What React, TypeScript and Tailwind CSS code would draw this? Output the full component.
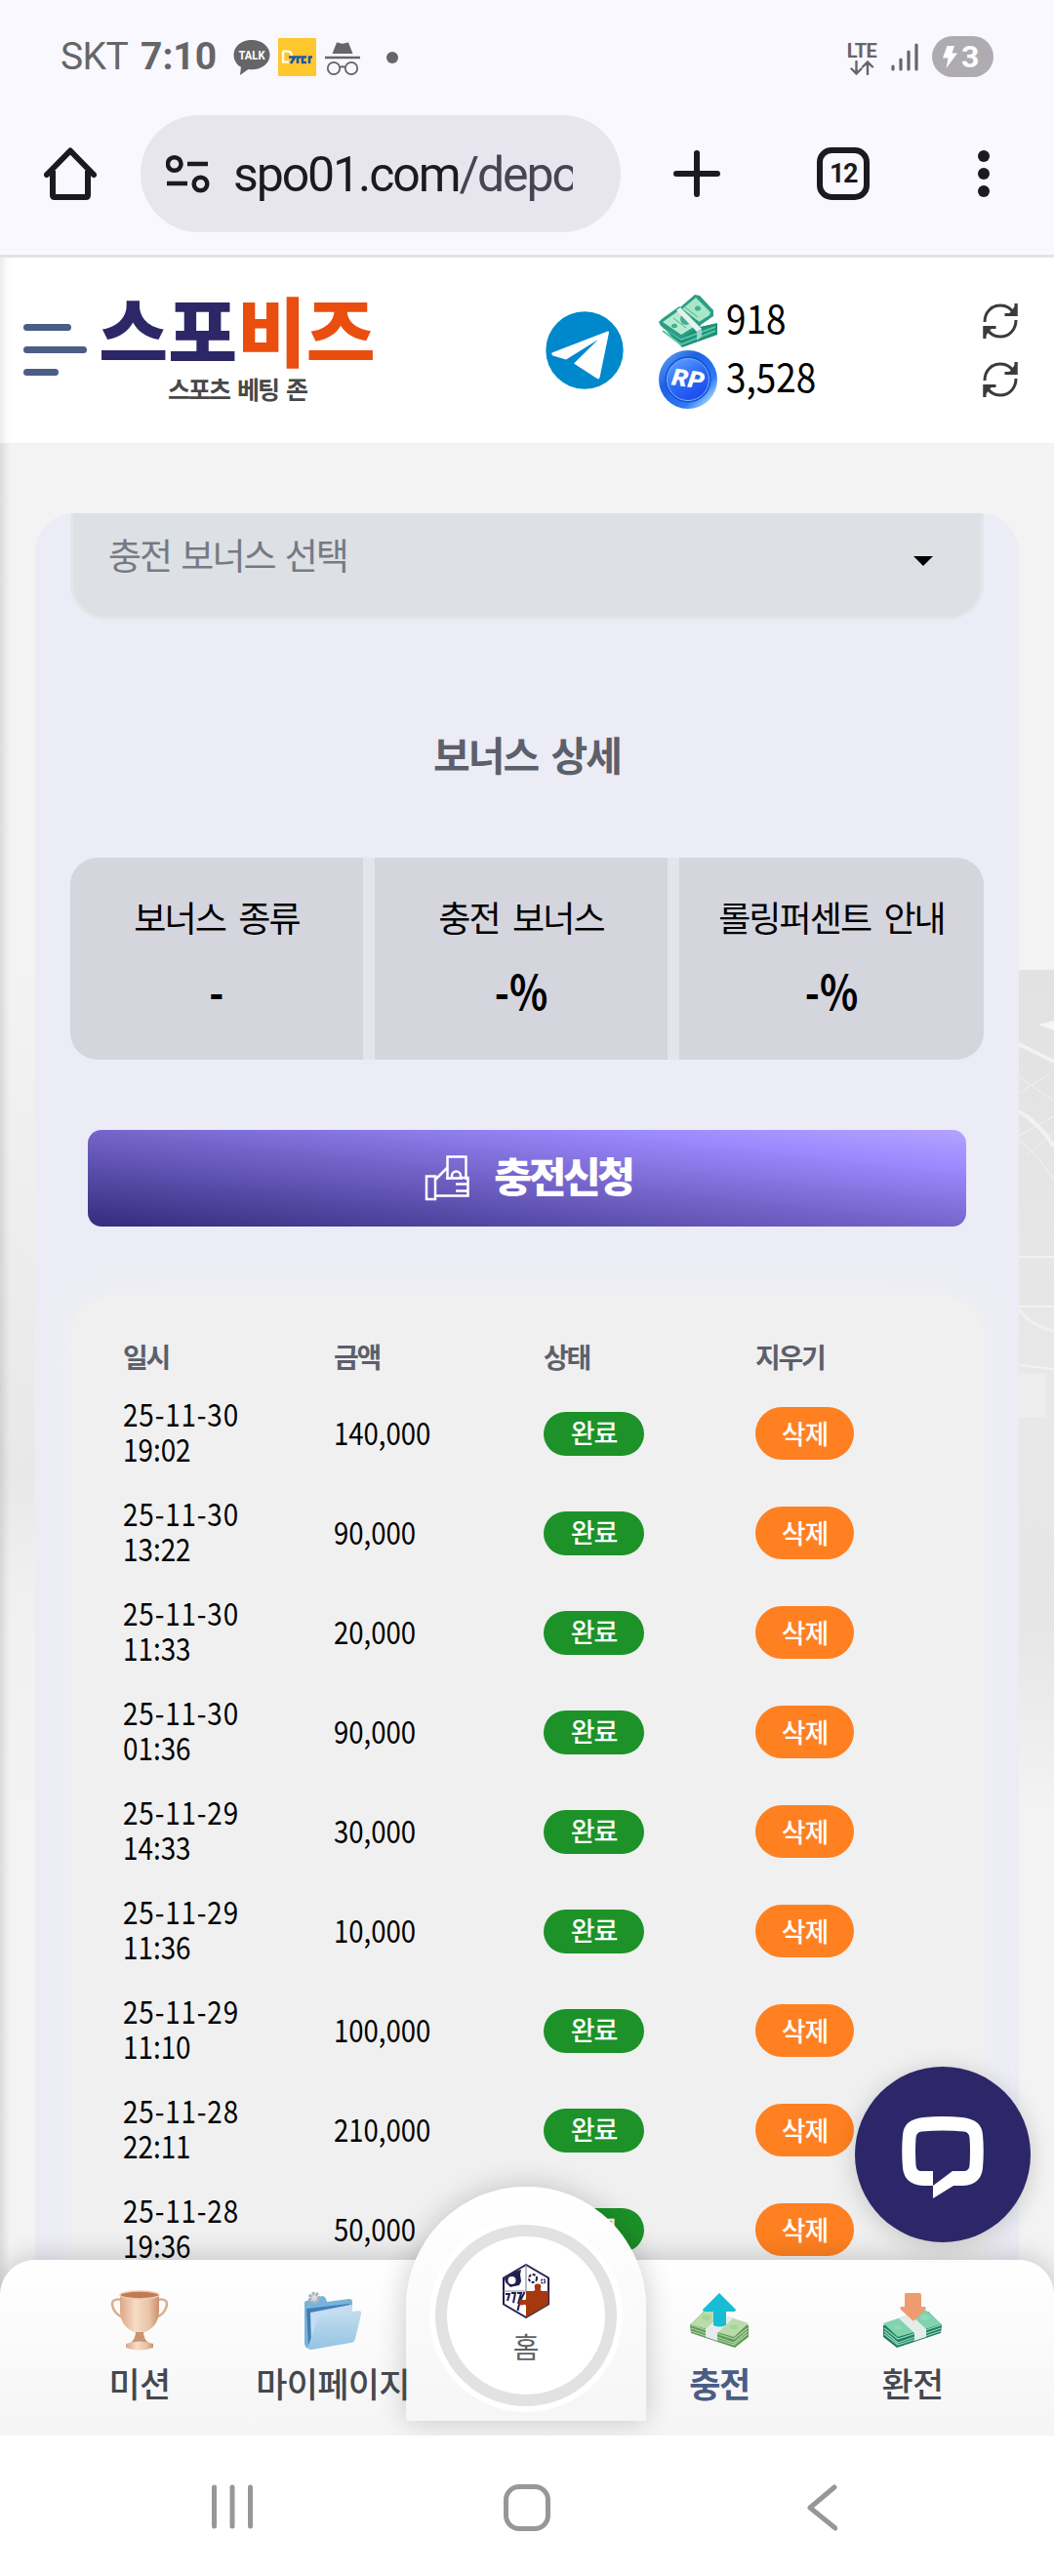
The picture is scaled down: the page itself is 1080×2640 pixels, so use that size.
import React from 'react';

interface Deposit {
  date: string;
  time: string;
  amount: string;
}

const deposits: Deposit[] = [
  { date: '25-11-30', time: '19:02', amount: '140,000' },
  { date: '25-11-30', time: '13:22', amount: '90,000' },
  { date: '25-11-30', time: '11:33', amount: '20,000' },
  { date: '25-11-30', time: '01:36', amount: '90,000' },
  { date: '25-11-29', time: '14:33', amount: '30,000' },
  { date: '25-11-29', time: '11:36', amount: '10,000' },
  { date: '25-11-29', time: '11:10', amount: '100,000' },
  { date: '25-11-28', time: '22:11', amount: '210,000' },
  { date: '25-11-28', time: '19:36', amount: '50,000' },
];

const StatusBar = () => (
  <div className="h-[118px] pl-[62px] pr-[62px] pt-[37px] flex items-start justify-between font-[Roboto,sans-serif] text-[#666568]">
    <div className="flex items-center h-[42px]">
      <span className="text-[39px] leading-[42px] tracking-[-0.6px] w-[82px]">SKT</span>
      <span className="text-[39px] leading-[42px] font-bold w-[95px]">7:10</span>
      <svg width="38" height="36" viewBox="0 0 38 36" className="mt-[2px]">
        <path d="M19 0C8.500 0 0.500 6.700 0.500 15.200c0 5.600 3.200 10.200 7.400 12.600L7 36l8.500-6c1 .2 2.300.3 3.500.3 10.500 0 18.500-6.700 18.500-15.100S29.500 0 19 0z" fill="#666568" />
        <text x="19" y="20" textAnchor="middle" fontSize="13" fontWeight="700" fill="#fff" textLength="27" lengthAdjust="spacingAndGlyphs">TALK</text>
      </svg>
      <svg width="39" height="39" viewBox="0 0 39 39" className="ml-[8px]">
        <rect width="39" height="39" fill="#ffc72e" />
        <path d="M5 13.500h4.500c3 0 4.500 2 4.500 5.500M5 13.500v11h6" fill="none" stroke="#fffbe8" strokeWidth="2.400" />
        <path d="M11 19.500h6l-4 6.500M20 26v-6.500h3.500M29 25h-4v-5.500h4M32 26v-6.500h3" fill="none" stroke="#1c56a8" strokeWidth="2.600" />
      </svg>
      <svg width="36" height="35" viewBox="0 0 36 35" className="ml-[9px] mt-[2px]">
        <path d="M12 1.500c2 0 3.500 1.200 6 1.200S22 1.500 24 1.500L28.500 13h-21z" fill="#666568" />
        <path d="M0 17h36" stroke="#666568" strokeWidth="2.600" />
        <circle cx="9" cy="28" r="6.200" fill="none" stroke="#666568" strokeWidth="1.800" />
        <circle cx="27" cy="28" r="6.200" fill="none" stroke="#666568" strokeWidth="1.800" />
        <path d="M15 27c2-1 4-1 6 0" fill="none" stroke="#666568" strokeWidth="1.800" />
      </svg>
      <span className="ml-[27px] w-3 h-3 rounded-full bg-[#666568] mt-[2px]" />
    </div>
    <div className="flex items-center h-[42px]">
      <div className="flex flex-col items-center w-[32px] mr-[14px] pt-[1px]">
        <span className="text-[20px] leading-[18px] font-bold tracking-[-0.5px] pt-[3px]">LTE</span>
        <svg width="26" height="15" viewBox="0 0 26 15" fill="none" stroke="#666568" strokeWidth="2.400" strokeLinecap="round" className="mt-[1px]">
          <path d="M7.500 1v12M2.500 8.500l5 5 5-5M19 14V2M14 6.500l5-5 5 5" />
        </svg>
      </div>
      <svg width="28" height="30" viewBox="0 0 28 30" stroke="#666568" strokeWidth="3.200" strokeLinecap="round" className="mr-[14px]">
        <path d="M2 25v3M10 18v10M18 10v18M26 3v25" />
      </svg>
      <div className="w-[63px] h-[42px] rounded-full bg-[#aeacb0] flex items-center pl-[11px] text-white">
        <svg width="15" height="23" viewBox="0 0 15 23">
          <path d="M4.500 0H12L9.500 7.500H15L3.500 23 5.500 12.500H0z" fill="#fff" />
        </svg>
        <span className="text-[32px] leading-[42px] font-bold ml-[4px]">3</span>
      </div>
    </div>
  </div>
);

const BrowserBar = () => (
  <div className="h-[143px] flex items-start font-[Roboto,sans-serif]">
    <div className="h-[120px] w-full flex items-center">
      <svg width="54" height="54" viewBox="0 0 54 54" fill="none" stroke="#1a1b20" strokeWidth="6" className="ml-[45px]">
        <path d="M3 28L27 3.500 51 28" strokeLinecap="round" strokeLinejoin="round" />
        <path d="M9 24v25q0 2 2 2h32q2 0 2-2V24" strokeLinejoin="round" />
      </svg>
      <div className="ml-[45px] w-[492px] h-[120px] rounded-full bg-[#e7e6ef] flex items-center pl-[26px]">
        <svg width="45" height="40" viewBox="0 0 45 40" fill="none" stroke="#1a1b20" strokeWidth="4.500">
          <circle cx="8.700" cy="10" r="6.800" />
          <path d="M22 10h21M1 30h21" />
          <circle cx="35.500" cy="30.500" r="6.800" />
        </svg>
        <div className="ml-[24px] w-[348px] overflow-hidden whitespace-nowrap text-[50px] leading-[64px] tracking-[-2.100px] text-[#1a1b20] pt-[2px]">
          spo01.com<span className="text-[#454650]">/depo</span>
        </div>
      </div>
      <svg width="48" height="48" viewBox="0 0 48 48" stroke="#1a1b20" strokeWidth="6" strokeLinecap="round" className="ml-[54px]">
        <path d="M24 3v42M3 24h42" />
      </svg>
      <div className="ml-[99px] w-[54px] h-[54px] border-[6px] border-[#1a1b20] rounded-[15px] flex items-center justify-center text-[27px] leading-[30px] font-bold text-[#1a1b20] tracking-[-1.500px]">
        12
      </div>
      <div className="ml-[111px] flex flex-col gap-[6px]">
        <span className="w-3 h-3 rounded-full bg-[#1a1b20]" />
        <span className="w-3 h-3 rounded-full bg-[#1a1b20]" />
        <span className="w-3 h-3 rounded-full bg-[#1a1b20]" />
      </div>
    </div>
  </div>
);

const CashIcon = () => (
  <svg width="60" height="56" viewBox="0 0 60 56">
    <path d="M2 32L24 55 60 42V30L24 38z" fill="#1d8f78" />
    <path d="M4 38L23 52 58 38M4 34L23 47 58 34" fill="none" stroke="#53c4a4" strokeWidth="2" />
    <path d="M16 19L37 1l5 1 14 15v6L24 45 4 33z" fill="#2b9e85" />
    <path d="M20 19L38 4l15 15-1 3-28 18z" fill="#a8e6c8" />
    <path d="M0 29l3-3 18-13 22 17v3L22 46 2 33z" fill="#2b9e85" />
    <path d="M4 29l17-12 18 15-16 10z" fill="#b5ecd0" />
    <path d="M15 25l13 10M27 14l13 10" stroke="#4fae92" strokeWidth="1" />
    <ellipse cx="16" cy="33" rx="3" ry="2.200" fill="#3fb38f" />
    <ellipse cx="40" cy="15" rx="3" ry="2.600" fill="#3fb38f" />
    <ellipse cx="28" cy="26" rx="6" ry="6" fill="#44ad8e" />
    <path d="M18 17l4-3 22 22-5 3z" fill="#e5f3f1" />
    <path d="M39 39l5-3v8l-5 4z" fill="#9fd3c8" />
  </svg>
);

const RpIcon = () => (
  <svg width="60" height="60" viewBox="0 0 60 60">
    <defs>
      <linearGradient id="rpRim" x1="0" y1="0" x2="1" y2="1">
        <stop offset="0" stopColor="#6db0f5" />
        <stop offset="0.35" stopColor="#1c62e2" />
        <stop offset="0.7" stopColor="#2f7af4" />
        <stop offset="0.85" stopColor="#8cc4fb" />
        <stop offset="1" stopColor="#1b4fd8" />
      </linearGradient>
      <linearGradient id="rpFace" x1="0" y1="0" x2="0.600" y2="1">
        <stop offset="0" stopColor="#64a8ff" />
        <stop offset="0.6" stopColor="#2a68f3" />
        <stop offset="1" stopColor="#1f4cf0" />
      </linearGradient>
    </defs>
    <circle cx="30" cy="30" r="30" fill="url(#rpRim)" />
    <circle cx="30" cy="30" r="23.500" fill="#164fd6" />
    <circle cx="30" cy="30" r="21.500" fill="url(#rpFace)" stroke="#79b4ff" strokeWidth="1" />
    <text x="30" y="37.500" textAnchor="middle" fontSize="24" fontWeight="900" fontStyle="italic" fill="#fff" fontFamily="Roboto, sans-serif" transform="rotate(8 30 30)" textLength="33" lengthAdjust="spacingAndGlyphs">RP</text>
  </svg>
);

const RefreshIcon = () => (
  <svg width="36" height="36" viewBox="0 0 36 36" fill="none" stroke="#3b3b3b" strokeWidth="3">
    <path d="M2 19C2 9 9 2 18 2c7 0 11.500 3.500 14.500 9" />
    <path d="M34 17c0 10-7 17-16 17-7 0-11.500-3.500-14.500-9" />
    <path d="M34 0v11.500H22.500M2 36V24.500h11.500" />
    <path d="M34 4v7.500h-6zM2 32v-7.500h6z" fill="#3b3b3b" />
  </svg>
);

const SiteHeader = () => (
  <header className="h-[193px] border-t-[3px] border-[#e1e3ea] bg-white flex items-start shadow-[inset_9px_0_8px_-6px_rgba(0,0,0,0.10)]">
    <div className="ml-[24px] mt-[68px] flex flex-col gap-4">
      <span className="h-[7px] w-[49px] rounded-full bg-[#4a5d85]" />
      <span className="h-[7px] w-[65px] rounded-full bg-[#4a5d85]" />
      <span className="h-[7px] w-[36px] rounded-full bg-[#4a5d85]" />
    </div>
    <div className="ml-[16px] mt-[35px] w-[276px] flex flex-col items-center">
      <div className="text-[77px] leading-[76px] font-black whitespace-nowrap text-[#2d2768]">
        스포<span className="text-[#e94e0f]">비즈</span>
      </div>
      <div className="mt-[8px] text-[25px] leading-[30px] font-bold tracking-[-1.900px] [word-spacing:4px] whitespace-nowrap text-[#484848]">스포츠 베팅 존</div>
    </div>
    <svg width="80" height="80" viewBox="0 0 80 80" className="ml-[178px] mt-[55px]">
      <circle cx="40" cy="40" r="39.700" fill="#0088cc" />
      <path d="M6.500 42.500L63.500 20.500q1.500-.5 1.500 1.200L55.500 68q-.8 2.500-3 .8L29 53.500 54 29 21 49.500 7.500 45.500q-2-1.500-1-3z" fill="#fff" />
    </svg>
    <div className="ml-[36px] mt-[37px] w-[330px] flex flex-col">
      <div className="flex items-start h-[58px] gap-[9px]">
        <CashIcon />
        <span className="text-[41px] leading-[50px] -mt-[2px] text-black inline-block origin-left scale-x-[0.9]">918</span>
      </div>
      <div className="flex items-start h-[60px] gap-[9px]">
        <RpIcon />
        <span className="text-[41px] leading-[50px] text-black inline-block origin-left scale-x-[0.9]">3,528</span>
      </div>
    </div>
    <div className="ml-[2px] mt-[47px] flex flex-col gap-[24px]">
      <RefreshIcon />
      <RefreshIcon />
    </div>
  </header>
);

// faint stadium photo behind the card, only the margins are visible
const Backdrop = () => (
  <svg width="1080" height="860" viewBox="0 0 1080 860" className="absolute left-0 top-[540px]">
    <defs>
      <linearGradient id="photo" x1="0" y1="0" x2="0" y2="1">
        <stop offset="0" stopColor="#e2e2e2" />
        <stop offset="0.5" stopColor="#e8e8e8" />
        <stop offset="0.78" stopColor="#e6e6e6" />
        <stop offset="1" stopColor="#f3f3f3" />
      </linearGradient>
      <linearGradient id="photoLeft" x1="0" y1="0" x2="0" y2="1">
        <stop offset="0" stopColor="#f3f3f3" />
        <stop offset="0.6" stopColor="#e8e8e8" />
        <stop offset="0.74" stopColor="#f0f0f0" />
        <stop offset="1" stopColor="#f3f3f3" />
      </linearGradient>
    </defs>
    <rect x="0" width="36" height="860" fill="url(#photoLeft)" />
    <rect x="1044" width="36" height="860" fill="url(#photo)" />
    <g fill="none" stroke="#f2f2f2" strokeWidth="2">
      <path d="M1044 76l36 18M1044 145c14 8 26 20 36 36" strokeWidth="4" />
      <path d="M1044 126l32-20M1044 110l36 24M1044 170l36-20M1052 190l28-24M1044 175q20 14 36 40" strokeWidth="1" />
      <path d="M1044 294h36M1044 345h36M1044 405l36 4" />
    </g>
    <path d="M1064 56l16-4v10z" fill="#f5f5f5" />
    <path d="M1044 348q14 18 36 22" stroke="#f0f0f0" strokeWidth="3" fill="none" />
    <path d="M1044 413h28v46h-28z" fill="#ededed" />
  </svg>
);

const ThumbIcon = () => (
  <svg width="46" height="47" viewBox="0 0 46 47" fill="none" stroke="#fff" strokeWidth="2.500">
    <path d="M2 21.500h9V45H2zM11 25l12-12M11 41.500h33.500V23H38" />
    <path d="M23.500 25V1.500h19V25" />
    <path d="M22 23.500h17M28 23v-2a4.500 4.500 0 0 1 9 0v2" />
    <path d="M32 29.500h12.500M32 36.500h12.500" />
  </svg>
);

const BonusCell = ({ label, value }: { label: string; value: string }) => (
  <div className="bg-[#d5d5de] pt-[38px] flex flex-col items-center text-black">
    <span className="text-[36px] leading-[44px] tracking-[-1.900px] [word-spacing:7px] whitespace-nowrap">{label}</span>
    <span className="mt-[28px] text-[48px] leading-[50px] font-bold inline-block scale-x-[0.85]">{value}</span>
  </div>
);

const DepositRow = ({ date, time, amount }: Deposit) => (
  <div className="h-[102px] grid grid-cols-[216px_215px_217px_1fr] items-center text-black text-[32px] leading-[36px]">
    <div className="pb-[6px] origin-left scale-x-[0.87] whitespace-nowrap">
      <div className="tracking-[1px]">{date}</div>
      <div>{time}</div>
    </div>
    <div className="pb-[4px] origin-left scale-x-[0.86]">{amount}</div>
    <div className="w-[103px] h-[45px] rounded-full bg-[#1c9228] text-white text-[27px] leading-[42px] tracking-[-1px] font-medium text-center">완료</div>
    <button className="w-[101px] h-[54px] rounded-full bg-[#ff8020] text-white text-[27px] leading-[50px] tracking-[-1px] font-medium text-center">삭제</button>
  </div>
);

const TrophyIcon = () => (
  <svg width="60" height="62" viewBox="0 0 60 62">
    <defs>
      <linearGradient id="cup" x1="0" y1="0" x2="1" y2="0">
        <stop offset="0" stopColor="#dba888" />
        <stop offset="0.4" stopColor="#f8dcc6" />
        <stop offset="0.75" stopColor="#e9c3a6" />
        <stop offset="1" stopColor="#c98f6d" />
      </linearGradient>
    </defs>
    <path d="M12 10C3 8 1 12 2.500 17 4 23 8 26 13 28M48 10c9-2 11 2 9.500 7C56 23 52 26 47 28" fill="none" stroke="#dcae8f" strokeWidth="2.600" />
    <path d="M10 4h40v17c0 12-7 20-17 23h-6C17 41 10 33 10 21z" fill="url(#cup)" />
    <ellipse cx="30" cy="5" rx="20" ry="4" fill="#c07a55" stroke="#f0cdb4" strokeWidth="1.500" />
    <path d="M26 43h8q0 7 6 12H20q6-5 6-12z" fill="#c99472" />
    <path d="M16 55q14-5 28 0v4q-14 5-28 0z" fill="url(#cup)" />
  </svg>
);

const FolderIcon = () => (
  <svg width="60" height="62" viewBox="0 0 60 62">
    <defs>
      <linearGradient id="folder" x1="0" y1="0" x2="0" y2="1">
        <stop offset="0" stopColor="#c2deef" />
        <stop offset="1" stopColor="#94c4e2" />
      </linearGradient>
    </defs>
    <path d="M1 13q0-2 2-2l16-5q4 0 5 6l23-3q3 0 3 3v30L8 60q-6 1-7-5z" fill="#7ab3da" />
    <path d="M3 19l44-5v28L5 56z" fill="#3d7fb8" />
    <path d="M7 23l41-8q3 0 2 4v24L8 54z" fill="#c5dcf3" />
    <path d="M14 30q1-3 4-3l38-6q4 0 3 4l-6 25q-1 4-5 4L8 61q-4 0-3-4z" fill="url(#folder)" />
    <circle cx="11" cy="8" r="4.500" fill="#d9dde2" stroke="#a9b0b8" strokeWidth="3.500" strokeDasharray="2.500 1.200" />
  </svg>
);

interface StackProps {
  side: string;
  edge: string;
  face: string;
  arrow: React.ReactNode;
  flip?: boolean;
}

const MoneyStack = ({ side, edge, face, arrow, flip }: StackProps) => (
  <svg width="60" height="62" viewBox="0 0 60 62">
    <g transform={flip ? 'translate(60 0) scale(-1 1)' : undefined}>
      <path d="M0 36L14 22 60 36v12L46 59 1 44z" fill={side} />
      <path d="M1 39l44 15 14-12M1 42l44 14 14-11M1 36l44 14 14-11" fill="none" stroke={edge} strokeWidth="1.300" />
      <path d="M0 35L17 20l43 14-15 14z" fill={face} />
      <ellipse cx="17" cy="28" rx="5" ry="3" fill={edge} />
      <ellipse cx="45" cy="38" rx="4" ry="2.500" fill={edge} />
      <path d="M16 40l16-15 12 4-16 15v8l-12-4z" fill="#e6ecec" />
    </g>
    {arrow}
  </svg>
);

const HexLogo = () => (
  <svg width="48" height="56" viewBox="0 0 48 56">
    <path d="M24 1L47 14.500v27L24 55 1 41.500v-27z" fill="#fff" stroke="#211d4e" strokeWidth="2" strokeLinejoin="round" />
    <path d="M3 31h4l-2 7M9 30h4l-2 10M15 30h4l-3 11M22.500 29l-5 10-2 9" fill="none" stroke="#211d4e" strokeWidth="2" />
    <path d="M24 28h23v13.500L24 55z" fill="#a4380f" />
    <path d="M24 28h8q2-1 1-3c-1-3 0-4.500 3-4.500s4 1.500 3 4.500q-1 2 1 3v1H24v14q-1-2-3-1c-2 1.500-4 0-4-2.500s2-4 4-2.500q2 1 3-1z" fill="#a4380f" />
    <path d="M24 1v27M1 28h23" stroke="#8e8da5" strokeWidth="1.200" />
    <path d="M2 15l11-7 6-2-1 5 1 7-2 4-5 1-4 1-5-5z" fill="#211d4e" />
    <circle cx="9.500" cy="17" r="4" fill="#fff" />
    <circle cx="31" cy="15" r="4" fill="none" stroke="#211d4e" strokeWidth="2" strokeDasharray="3 1.500" />
    <circle cx="41.500" cy="18" r="2" fill="none" stroke="#211d4e" strokeWidth="1.500" strokeDasharray="2 1" />
  </svg>
);

const NavItem = ({ icon, label, active }: { icon: React.ReactNode; label: string; active?: boolean }) => (
  <div className="w-[198px] pt-[31px] flex flex-col items-center relative z-20">
    {icon}
    <span
      className={
        active
          ? 'mt-[11px] text-[35px] leading-[44px] tracking-[-1.500px] font-bold text-[#4a5d85] whitespace-nowrap'
          : 'mt-[11px] text-[35px] leading-[44px] tracking-[-0.700px] font-medium text-[#45484f] whitespace-nowrap'
      }
    >
      {label}
    </span>
  </div>
);

const BottomNav = () => (
  <nav className="absolute left-0 bottom-0 w-full h-[180px] rounded-t-[36px] bg-linear-to-b from-white to-[#f5f5f5] shadow-[0_0_30px_rgba(0,0,0,0.22)] px-[44px] flex">
    <NavItem icon={<TrophyIcon />} label="미션" />
    <NavItem icon={<FolderIcon />} label="마이페이지" />
    <div className="w-[198px] flex justify-center">
      <div className="relative z-10 shrink-0 -mt-[75px] w-[246px] h-[240px] rounded-t-[123px] bg-linear-to-b from-white to-[#f6f6f6] shadow-[0_0_30px_rgba(0,0,0,0.20)] pt-[33px] flex flex-col items-center">
        <div className="w-[198px] h-[198px] rounded-full bg-white p-[6px]">
          <div className="w-[186px] h-[186px] rounded-full border-[12px] border-[#e2e2e2] flex flex-col items-center pt-[28px]">
            <HexLogo />
            <span className="mt-[10px] text-[29px] leading-[36px] text-[#5d6064]">홈</span>
          </div>
        </div>
      </div>
    </div>
    <NavItem
      active
      label="충전"
      icon={
        <MoneyStack
          side="#5f9a58"
          edge="#a9d39c"
          face="#b9dcaa"
          arrow={<path d="M30 3L47 20q0 2-2 2h-8v14q-7 3-13 0V22h-9q-2 0-2-2z" fill="#18bcd4" />}
        />
      }
    />
    <NavItem
      label="환전"
      icon={
        <MoneyStack
          flip
          side="#1f7d60"
          edge="#8fd9b9"
          face="#7fd3ae"
          arrow={<path d="M23 3h14q2 0 2 2v12h3q3 0 1 3L32 31q-1 1-2 0L18 20q-2-3 1-3h3V5q0-2 1-2z" fill="#ee9b70" />}
        />
      }
    />
  </nav>
);

const SystemNav = () => (
  <div className="h-[144px] bg-white flex justify-between px-[217px] pt-[50px]">
    <svg width="43" height="47" viewBox="0 0 43 47" stroke="#979797" strokeWidth="5" strokeLinecap="round">
      <path d="M2.500 3v40M21 3v40M39.500 3v40" />
    </svg>
    <div className="ml-[36px] w-[48px] h-[48px] rounded-[16px] border-[5px] border-[#979797]" />
    <svg width="31" height="48" viewBox="0 0 31 48" fill="none" stroke="#979797" strokeWidth="5" strokeLinecap="round" strokeLinejoin="round" className="mr-[5px] ml-[43px]">
      <path d="M28 3L3 24l26 21" />
    </svg>
  </div>
);

const App: React.FC = () => {
  return (
    <div className="w-[1080px] h-[2640px] overflow-hidden bg-[#f9f8ff] font-['Noto_Sans_CJK_KR',sans-serif] flex flex-col">
      <StatusBar />
      <BrowserBar />
      <SiteHeader />

      <main className="relative h-[2042px] overflow-hidden bg-[#f3f3f3] px-9 pt-[72px]">
        <Backdrop />
        <div className="relative h-[2000px] rounded-t-[40px] overflow-hidden bg-[#ececf6] px-9">
          <div className="h-[109px] rounded-b-[36px] border-x-[3px] border-b-[3px] border-[#e4e6ea] bg-[#dde0e5] flex justify-between pl-[36px] pr-[49px]">
            <span className="pt-[22px] text-[37px] leading-[40px] tracking-[-2px] [word-spacing:4px] text-[#777983] whitespace-nowrap">충전 보너스 선택</span>
            <svg width="20" height="10" viewBox="0 0 20 10" className="mt-[44px]">
              <path d="M0 0h20L10 10z" fill="#000" />
            </svg>
          </div>

          <h2 className="mt-[115px] text-[41px] leading-[44px] tracking-[-2px] [word-spacing:6px] font-bold text-center text-[#5c606b]">보너스 상세</h2>

          <div className="mt-[85px] h-[207px] rounded-[28px] overflow-hidden bg-[#e4e5ea] grid grid-cols-[300px_300px_312px] gap-[12px]">
            <BonusCell label="보너스 종류" value="-" />
            <BonusCell label="충전 보너스" value="-%" />
            <BonusCell label="롤링퍼센트 안내" value="-%" />
          </div>

          <div className="px-[18px] pt-[72px]">
            <button className="w-full h-[99px] rounded-[14px] bg-[linear-gradient(to_top_right,#352b7c_0%,#7565cb_50%,#9c8aff_80%,#b4a3ff_100%)] flex items-center justify-center gap-[25px] text-white pl-[3px]">
              <ThumbIcon />
              <span className="text-[42px] leading-[50px] font-black tracking-[-3.300px] pb-[8px]">충전신청</span>
            </button>
          </div>

          <div className="mt-[71px] h-[1100px] rounded-[44px] bg-[#f0f0f0] shadow-[0_0_50px_#f0f0f0] pl-[54px] pt-[44px]">
            <div className="h-[36px] grid grid-cols-[216px_215px_217px_1fr] text-[28px] leading-[36px] tracking-[-2.200px] font-bold text-[#5c606b]">
              <span>일시</span>
              <span>금액</span>
              <span>상태</span>
              <span>지우기</span>
            </div>
            <div className="mt-[10px]">
              {deposits.map((d) => (
                <DepositRow key={d.date + d.time} {...d} />
              ))}
            </div>
          </div>
        </div>

        <div className="absolute left-0 top-0 w-[10px] h-full bg-linear-to-r from-black/10 to-transparent" />
        <BottomNav />

        <button className="absolute z-30 left-[876px] top-[1664px] w-[180px] h-[180px] rounded-full bg-[#2d2668] shadow-[0_4px_24px_rgba(0,0,0,0.18)] flex items-center justify-center pt-[5px]">
          <svg width="84" height="84" viewBox="0 0 84 84" fill="none">
            <path fillRule="evenodd" d="M22 1Q42-.8 62 1 82 3 83 19q1.500 16 0 34Q81 70 63 71H53L32 84V56h-12q-5 0-5.500-6-1-16 0-28 .5-6 6-6.500 21-2 43 0 5.500.5 6 6.500 1 13 0 28-.5 6-6 6H52L32 71H22Q3 70 1 53q-1.500-18 0-34Q2 3 22 1z" fill="#fff" />
          </svg>
        </button>
      </main>

      <SystemNav />
    </div>
  );
};

export default App;
